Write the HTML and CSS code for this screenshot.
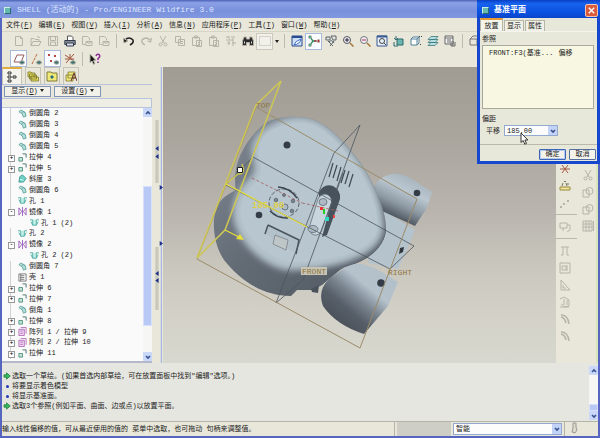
FILE: index.html
```html
<!DOCTYPE html>
<html lang="zh-CN">
<head>
<meta charset="utf-8">
<title>SHELL - Pro/ENGINEER Wildfire 3.0</title>
<link rel="stylesheet" href="styles.css">
</head>
<body>
<svg class="defs" aria-hidden="true">
  <symbol id="new" viewBox="0 0 12 12"><path d="M2.500 1.500h5l2 2v7h-7zM7.500 1.500v2h2"/></symbol>
  <symbol id="open" viewBox="0 0 12 12"><path d="M1 10.500v-7h3l1 1h4v2M1 10.500l2-4h8l-2 4zM7 2q2-1 3 1"/></symbol>
  <symbol id="save" viewBox="0 0 12 12"><path d="M1.500 1.500h9v9h-9zM3.500 1.500v4h5v-4M3.500 10v-3h5v3"/></symbol>
  <symbol id="print" viewBox="0 0 12 12"><path fill="#fff" stroke="#555" d="M3.500 5v-4h4l1.500 1.500v3"/><path fill="#8a8f98" stroke="#333c4c" d="M.8 5.500h10.400v4h-10.400z"/><path fill="#dde" stroke="#333c4c" d="M2.500 8h7v3h-7z"/></symbol>
  <symbol id="mail" viewBox="0 0 12 12"><path d="M1.500 1.500h5l2 2v2M1.500 1.500v8h3M5 6.500h6v4h-6zl3 2 3-2"/></symbol>
  <symbol id="undo" viewBox="0 0 12 12"><path fill="none" stroke="#222" stroke-width="1.500" d="M2 5q4-4 8 0 1 3-3 5"/><path fill="#222" d="M0 3l1 5 4-2z"/></symbol>
  <symbol id="redo" viewBox="0 0 12 12"><path stroke-width="1.200" d="M10 5q-4-4-8 0-1 3 3 5M11.500 3l-1 4-3-1"/></symbol>
  <symbol id="cut" viewBox="0 0 12 12"><path d="M3 1l4 7M9 1l-4 7"/><circle cx="3.500" cy="9.500" r="1.500"/><circle cx="8.500" cy="9.500" r="1.500"/></symbol>
  <symbol id="copy" viewBox="0 0 12 12"><path d="M1.500 1.500h5v6h-5zM4.500 4.500h6v6h-6zM6 6.500h3M6 8.500h3"/></symbol>
  <symbol id="paste" viewBox="0 0 12 12"><path d="M1.500 2.500h7v8h-7zM3.500 1h3v2h-3zM5.500 5.500h5v6h-5zM7 7.500h2M7 9.500h2"/></symbol>
  <symbol id="regen" viewBox="0 0 12 12"><path d="M1 2h3M6 2h4M1 5h2M5 5h3M2 8h3M7 8h4M4 1v9M8 3v8"/></symbol>
  <symbol id="find" viewBox="0 0 12 12"><path fill="#2a2a2a" d="M2 2h2.500v2h3v-2h2.500l1.500 4v4.500h-4v-3h-3v3h-4v-4.500z"/><path stroke="#ddd" d="M2.500 6.500v2M9.500 6.500v2"/></symbol>
  <symbol id="box" viewBox="0 0 12 12"><path stroke-dasharray="1 1" d="M.5 1.500h11v9h-11z"/></symbol>
  <symbol id="repaint" viewBox="0 0 12 12"><path fill="#cfe0f4" stroke="#2b4b92" d="M1 1h10v10h-10z"/><path stroke="#2b4b92" stroke-width="2" d="M1 2h10"/><path fill="#fff" stroke="#3c6ac0" d="M3 10q1-4 7-6-1 5-7 6"/></symbol>
  <symbol id="spin" viewBox="0 0 12 12"><path stroke="#2d8c61" stroke-width="1.300" d="M2 2l3 4-3 4M5 6h3"/><path stroke="#a33" stroke-width="1.300" d="M6 6h4"/><circle cx="10.500" cy="6" r="1.500" fill="#b02c2c"/><circle cx="2" cy="2" r="1.500" fill="#2fa56f"/><circle cx="2" cy="10" r="1.500" fill="#2fa56f"/></symbol>
  <symbol id="orient" viewBox="0 0 12 12"><path stroke="#59636c" d="M1 2h4v3h-4zM6 1h5v4h-3zM3 6l5 5M9 6l-4 5M4 7q3-3 5 1"/></symbol>
  <symbol id="zin" viewBox="0 0 12 12"><circle cx="5" cy="5" r="3.500" fill="#eef" stroke="#555"/><path stroke="#222" d="M3 5h4M5 3v4"/><path stroke="#a77738" stroke-width="1.500" d="M8 8l3.500 3.500"/></symbol>
  <symbol id="zout" viewBox="0 0 12 12"><circle cx="5" cy="5" r="3.500" fill="#eef" stroke="#777"/><path stroke="#a33" d="M3 5h4"/><path stroke="#a77738" stroke-width="1.500" d="M8 8l3.500 3.500"/></symbol>
  <symbol id="refit" viewBox="0 0 12 12"><path fill="#e6f0fa" stroke="#3b5b93" d="M1 1h10v10h-10z"/><path stroke="#3b5b93" stroke-width="2" d="M1 1.500h10"/><circle cx="6" cy="6" r="2.500" stroke="#444"/><path stroke="#444" d="M8 8l2 2"/></symbol>
  <symbol id="view" viewBox="0 0 12 12"><path fill="#6bb6ae" stroke="#2f6970" d="M4 4h6v6h-6z"/><path stroke="#2f6970" d="M1 7v4h4M3 1v3M1 3l2 2 2-2"/></symbol>
  <symbol id="named" viewBox="0 0 12 12"><path fill="#fff" stroke="#53809b" d="M1 4h6v6h-6zM1 4l2-2h6l-2 2M7 10l2-2v-6"/><path stroke="#444" stroke-dasharray="1 1" d="M9 1.500h3M10 9.500h2"/></symbol>
  <symbol id="layers" viewBox="0 0 12 12"><path fill="#b5dfe0" stroke="#3c777c" stroke-width=".8" d="M1 10.500l3-3h7l-3 3zM1 7.500l3-3h7l-3 3zM1 4.500l3-3h7l-3 3z"/></symbol>
  <symbol id="list" viewBox="0 0 12 12"><path fill="#f5f5f5" stroke="#666" d="M1 1h8v8h-8z"/><path stroke="#666" d="M1 3h8M3 5h4M3 7h3M7 6v5M9 6v5M11 7v4M7 11h4"/></symbol>
  <symbol id="wire" viewBox="0 0 12 12"><path stroke="#777" d="M1 4h7v6h-7zM1 4l3-3h7l-3 3M8 10l3-3v-6"/></symbol>
  <symbol id="dplane" viewBox="0 0 12 12"><path stroke="#9a5d58" d="M1 9l3-7h7l-3 7z"/><ellipse cx="9" cy="9.500" rx="2.500" ry="1.800" fill="#3f7270"/></symbol>
  <symbol id="daxis" viewBox="0 0 12 12"><path stroke="#b9663b" stroke-dasharray="3 1" d="M2 11l5-10"/><ellipse cx="9" cy="9.500" rx="2.500" ry="1.800" fill="#3f7270"/></symbol>
  <symbol id="dpoint" viewBox="0 0 12 12"><path stroke="#b04a40" d="M1 1l2 2M3 1l-2 2M7 2l2 2M9 2l-2 2M3 7l2 2M5 7l-2 2"/><ellipse cx="9.500" cy="9.500" rx="2.500" ry="1.800" fill="#3f7270"/></symbol>
  <symbol id="dcsys" viewBox="0 0 12 12"><path stroke="#a0563c" d="M1 2l9 6M10 1l-8 9M6 1v5M1 6h9"/><ellipse cx="9" cy="9.500" rx="2.500" ry="1.800" fill="#3f7270"/></symbol>
  <symbol id="help" viewBox="0 0 12 12"><path fill="#111" d="M1 1v9l2-2 1.500 3.500 1.500-1-1.500-3h2.500z"/><path stroke="#8c2a94" stroke-width="1.500" d="M7 3q1-2.500 3-1.500 2 2-1 4v1.500M9 8.500v1.500"/></symbol>
  <symbol id="tree" viewBox="0 0 12 12"><path stroke="#333" d="M2 1h3v2h-3zM2 5h3v2h-3zM2 9h3v2h-3zM7 5h3v2h-3z"/></symbol>
  <symbol id="folders" viewBox="0 0 12 12"><path fill="#e6df5c" stroke="#77722b" stroke-width=".8" d="M1 2h3l1 1h3v4h-7zM2.500 4h3l1 1h3v4h-7zM4 6h3l1 1h3.500v4h-7.500z"/></symbol>
  <symbol id="favor" viewBox="0 0 12 12"><path fill="#efe978" stroke="#817936" d="M1 2h4l1 1h5v8h-10z"/><path fill="#286a75" d="M6 5l2 2-2 2-2-2z"/></symbol>
  <symbol id="conn" viewBox="0 0 12 12"><path fill="#efe978" stroke="#817936" stroke-width=".8" d="M1 5h7v6h-7zM3 2h7v6h-7z"/><path stroke="#6b3434" d="M6 11l3-8 3 8M7 8h4"/></symbol>
  <symbol id="round" viewBox="0 0 10 10"><path fill="#b6ded9" stroke="#62a59f" d="M1 3q2-3 4-1 4 1 4 6l-3 1q0-4-5-6M4 4q2-2 4 0"/></symbol>
  <symbol id="extrude" viewBox="0 0 10 10"><path fill="#c4e6dd" stroke="#4e927c" d="M1 5h4v4h-4z"/><path stroke="#456d66" d="M5 1h4v4"/></symbol>
  <symbol id="draft" viewBox="0 0 10 10"><path fill="#6fd0c4" stroke="#3a988f" d="M1 9l1-6 3-2 4 4-3 4z"/><path stroke="#dff" d="M2 6l4 1"/></symbol>
  <symbol id="hole" viewBox="0 0 10 10"><path fill="#c6f0ea" stroke="#4aada2" d="M0 2h3v6h4v-6h3M3 8l-2-4M7 8l2-4"/></symbol>
  <symbol id="mirror" viewBox="0 0 10 10"><path stroke="#9a59bd" d="M5 0v10M1 1v8l3-4zM9 1v8l-3-4z"/></symbol>
  <symbol id="shell" viewBox="0 0 10 10"><path stroke="#777" d="M1 1h8v8h-8zM3 1v8M3 3h4M3 5h4M3 7h4"/></symbol>
  <symbol id="pattern" viewBox="0 0 10 10"><path fill="#f3def5" stroke="#a04aa8" stroke-width=".8" d="M1 2.500h6v7h-6z"/><path stroke="#a04aa8" stroke-width=".8" d="M3 .5h6v7M2.500 4.500h3M2.500 7h3"/></symbol>
  <symbol id="up" viewBox="0 0 8 8"><path fill="none" stroke="#3b5390" stroke-width="1.600" d="M2 5l2-2 2 2"/></symbol>
  <symbol id="down" viewBox="0 0 8 8"><path fill="none" stroke="#3b5390" stroke-width="1.600" d="M2 3l2 2 2-2"/></symbol>
  <symbol id="go" viewBox="0 0 8 8"><path fill="#35bb5d" stroke="#1a7738" stroke-width=".7" d="M1 2.800h2.500v-2l3.800 3.200-3.800 3.200v-2h-2.500z"/></symbol>
  <symbol id="star" viewBox="0 0 12 12"><path stroke="#a55a44" d="M1 6h10M3 2l6 8M9 2l-6 8"/></symbol>
  <symbol id="ruler" viewBox="0 0 12 12"><path fill="#efe59b" stroke="#9a8a3c" d="M1 7h10v3h-10z"/><path stroke="#775" d="M3 6l1-3M8 6l-1-3M5 1.500h2M9 3v2"/></symbol>
  <symbol id="dots" viewBox="0 0 12 12"><path d="M1 9l2 2M3 9l-2 2M4 6l2 2M6 6l-2 2M8 3l2 2M10 3l-2 2"/></symbol>
  <symbol id="anno" viewBox="0 0 12 12"><path d="M1 2h7v5h-7zM8 4h3v5l-3 2M4 7v3"/></symbol>
  <symbol id="tee" viewBox="0 0 12 12"><path d="M2 2h8M4 2v8M8 2v8M2 10h2M8 10h2"/></symbol>
  <symbol id="sq" viewBox="0 0 12 12"><path d="M1 1h10v10h-10zM3 4h4v4h-4zM8 3v6"/></symbol>
  <symbol id="angle" viewBox="0 0 12 12"><path d="M2 1v10h9zM4 6v3h3"/></symbol>
  <symbol id="cubes" viewBox="0 0 12 12"><path d="M1 3l4-2 5 3v6l-4 1-4-3M1 11h9M5 3v6M8 4v5"/></symbol>
  <symbol id="arc" viewBox="0 0 12 12"><path stroke-width="1.500" d="M2 2q7 0 8 9M2 4q4 1 5 6"/></symbol>
  <symbol id="circ" viewBox="0 0 12 12"><path d="M1 4h6v7h-6z"/><circle cx="7.500" cy="5" r="3.500"/></symbol>
  <symbol id="grid" viewBox="0 0 12 12"><path d="M1 1h9v10h-9zM4 1v10M7 1v10M1 4h9M1 7h9M11.500 1v10"/></symbol>
</svg>

<div class="window">
  <header class="titlebar"><span class="app-icon"></span><h1>SHELL (活动的) - Pro/ENGINEER Wildfire 3.0</h1></header>
  <nav class="menu">
    <button>文件(<u>F</u>)</button><button>编辑(<u>E</u>)</button><button>视图(<u>V</u>)</button><button>插入(<u>I</u>)</button><button>分析(<u>A</u>)</button><button>信息(<u>N</u>)</button><button>应用程序(<u>P</u>)</button><button>工具(<u>T</u>)</button><button>窗口(<u>W</u>)</button><button>帮助(<u>H</u>)</button>
  </nav>
  <div class="toolbar">
    <button class="tool"><svg><use href="#new"/></svg></button>
    <button class="tool"><svg><use href="#open"/></svg></button>
    <button class="tool"><svg><use href="#save"/></svg></button>
    <button class="tool"><svg><use href="#print"/></svg></button>
    <button class="tool"><svg><use href="#mail"/></svg></button>
    <button class="tool"><svg><use href="#mail"/></svg></button>
    <span class="sep"></span>
    <button class="tool"><svg><use href="#undo"/></svg></button>
    <button class="tool"><svg><use href="#redo"/></svg></button>
    <button class="tool"><svg><use href="#cut"/></svg></button>
    <button class="tool"><svg><use href="#copy"/></svg></button>
    <button class="tool"><svg><use href="#paste"/></svg></button>
    <button class="tool"><svg><use href="#paste"/></svg></button>
    <button class="tool"><svg><use href="#regen"/></svg></button>
    <button class="tool"><svg><use href="#find"/></svg></button>
    <button class="tool raised"><svg><use href="#box"/></svg></button>
    <button class="drop"><i class="caret"></i></button>
    <span class="sep"></span>
    <button class="tool"><svg><use href="#repaint"/></svg></button>
    <button class="tool on"><svg><use href="#spin"/></svg></button>
    <button class="tool"><svg><use href="#orient"/></svg></button>
    <button class="tool"><svg><use href="#zin"/></svg></button>
    <button class="tool"><svg><use href="#zout"/></svg></button>
    <button class="tool"><svg><use href="#refit"/></svg></button>
    <button class="tool"><svg><use href="#view"/></svg></button>
    <button class="tool"><svg><use href="#named"/></svg></button>
    <button class="tool"><svg><use href="#layers"/></svg></button>
    <button class="tool"><svg><use href="#list"/></svg></button>
    <span class="sep"></span>
    <button class="tool"><svg><use href="#wire"/></svg></button>
  </div>
  <div class="toolbar second">
    <button class="tool on"><svg><use href="#dplane"/></svg></button>
    <button class="tool"><svg><use href="#daxis"/></svg></button>
    <button class="tool on"><svg><use href="#dpoint"/></svg></button>
    <button class="tool"><svg><use href="#dcsys"/></svg></button>
    <span class="sep"></span>
    <button class="tool"><svg><use href="#help"/></svg></button>
  </div>

  <main class="work">
    <aside class="side">
      <div class="side-tabs">
        <button class="side-tab current"><svg><use href="#tree"/></svg></button>
        <button class="side-tab"><svg><use href="#folders"/></svg></button>
        <button class="side-tab"><svg><use href="#favor"/></svg></button>
        <button class="side-tab"><svg><use href="#conn"/></svg></button>
      </div>
      <div class="side-actions">
        <button>显示(<u>D</u>)<i class="caret"></i></button>
        <button>设置(<u>G</u>)<i class="caret"></i></button>
      </div>
      <div class="tree-head"></div>
      <div class="tree-box">
        <ul class="tree">
          <li><b></b><svg><use href="#round"/></svg>倒圆角 2</li>
          <li><b></b><svg><use href="#round"/></svg>倒圆角 3</li>
          <li><b></b><svg><use href="#round"/></svg>倒圆角 4</li>
          <li><b></b><svg><use href="#round"/></svg>倒圆角 5</li>
          <li><b class="plus"></b><svg><use href="#extrude"/></svg>拉伸 4</li>
          <li><b class="plus"></b><svg><use href="#extrude"/></svg>拉伸 5</li>
          <li><b></b><svg><use href="#draft"/></svg>斜度 3</li>
          <li><b></b><svg><use href="#round"/></svg>倒圆角 6</li>
          <li><b></b><svg><use href="#hole"/></svg>孔 1</li>
          <li><b class="minus"></b><svg><use href="#mirror"/></svg>镜像 1</li>
          <li class="child"><b></b><svg><use href="#hole"/></svg>孔 1 (2)</li>
          <li><b></b><svg><use href="#hole"/></svg>孔 2</li>
          <li><b class="minus"></b><svg><use href="#mirror"/></svg>镜像 2</li>
          <li class="child"><b></b><svg><use href="#hole"/></svg>孔 2 (2)</li>
          <li><b></b><svg><use href="#round"/></svg>倒圆角 7</li>
          <li><b></b><svg><use href="#shell"/></svg>壳 1</li>
          <li><b class="plus"></b><svg><use href="#extrude"/></svg>拉伸 6</li>
          <li><b class="plus"></b><svg><use href="#extrude"/></svg>拉伸 7</li>
          <li><b></b><svg><use href="#round"/></svg>倒角 1</li>
          <li><b class="plus"></b><svg><use href="#extrude"/></svg>拉伸 8</li>
          <li><b class="plus"></b><svg><use href="#pattern"/></svg>阵列 1 / 拉伸 9</li>
          <li><b class="plus"></b><svg><use href="#pattern"/></svg>阵列 2 / 拉伸 10</li>
          <li><b class="plus"></b><svg><use href="#extrude"/></svg>拉伸 11</li>
        </ul>
        <div class="scroll">
          <button><svg><use href="#up"/></svg></button>
          <span class="space-a"></span><span class="thumb"></span><span class="space-b"></span>
          <button><svg><use href="#down"/></svg></button>
        </div>
      </div>
    </aside>

    <div class="splitter">
      <svg viewBox="0 0 10 296" preserveAspectRatio="none">
        <path fill="#c9c8bc" d="M3 53h3v63h-3zM3 180h3v63h-3z"/>
        <path stroke="#9db0e6" d="M8.500 0v296"/>
        <path fill="#1c2f86" d="M6 79v5l-3-2.500zM6 87v5l-3-2.500zM6 204v5l-3-2.500zM6 211v5l-3-2.500zM7 118v5l3-2.500zM7 174v5l3-2.500z"/>
      </svg>
    </div>

    <section class="viewport">
      <svg viewBox="163 67 393 296" preserveAspectRatio="none">
        <defs>
          <linearGradient id="wall" x1="0" y1="0" x2="1" y2="1"><stop offset="0" stop-color="#858f99"/><stop offset=".5" stop-color="#626a74"/><stop offset="1" stop-color="#4d555f"/></linearGradient>
          <linearGradient id="cyl" gradientUnits="userSpaceOnUse" x1="413" y1="179" x2="394" y2="219"><stop offset="0" stop-color="#a9b6bf"/><stop offset=".3" stop-color="#bac7d0"/><stop offset=".65" stop-color="#8c98a2"/><stop offset="1" stop-color="#454d56"/></linearGradient>
          <linearGradient id="cyl2" gradientUnits="userSpaceOnUse" x1="385" y1="270" x2="342" y2="322"><stop offset="0" stop-color="#b2c0ca"/><stop offset=".35" stop-color="#b5c2cc"/><stop offset=".58" stop-color="#7b8691"/><stop offset=".8" stop-color="#565e68"/><stop offset="1" stop-color="#4d545e"/></linearGradient>
          <filter id="soft" x="-10%" y="-10%" width="120%" height="120%"><feGaussianBlur stdDeviation="3"/></filter>
          <clipPath id="bodyclip"><path d="M264 124C275 116 298 115 312 119C332 126 348 146 362 165C376 186 386 212 386 228C386 244 372 260 345 267L340 270L322 285L313 290L297 290L291 296C262 296 240 280 224 260C212 242 211 215 219 203C224 196 232 192 236 190C233 175 236 148 264 124Z"/></clipPath>
        </defs>
        <path fill="#b5c3cc" d="M375 205l40 25-7 17-10 22-30-6z"/>
        <path fill="#30363c" d="M400 248l4-1-1 5-4 2z"/>
        <path fill="url(#cyl)" d="M373 188Q378 177 392 174Q402 173 412 179L432 192L427 208L415 226L382 211Z"/>
        <g clip-path="url(#bodyclip)">
          <path fill="url(#wall)" d="M205 110h190v195h-190z"/>
          <path id="top-face" filter="url(#soft)" fill="#b4c2cb" d="M272 124C290 114 305 116 314 119C332 125 350 147 364 166C378 187 384 212 384 226C383 242 372 253 350 261C330 268 305 271 285 270C262 265 241 244 235 225C230 208 235 190 249 179C257 172 255 165 252 155C250 140 260 130 272 124Z"/>
          <path fill="#b9c7d0" opacity=".8" d="M276 128C290 121 305 122 312 124C328 130 344 149 358 168C371 188 378 212 378 226C377 237 368 247 348 254C328 260 305 263 288 262C266 256 247 238 242 222C238 208 242 195 254 184C263 176 262 167 259 156C257 143 264 133 276 128Z"/>
          <path fill="none" stroke="#59636d" d="M386 228C386 244 372 260 345 267"/>
        </g>
        <path fill="#4a525c" d="M311 289l8-4-1 8-6-1z"/>
        <path fill="url(#cyl2)" d="M343 269Q352 263 362 264L375 268L398 282L388 306L364 334Q336 325 323 306Q317 290 330 278Z"/>
        <g fill="#343d47"><circle cx="287" cy="145" r="3.500"/><circle cx="417" cy="193" r="3.300"/><circle cx="259" cy="215" r="3.300"/><circle cx="381" cy="283" r="3.800"/></g>
        <path stroke="#3e4a54" stroke-width="1.200" d="M333 163l-4 14M337 165l-4 13M341 167l-4 14M345 170l-4 13M349 171l-4 13M353 174l-4 13"/>
        <path fill="#47525c" d="M319 192q5-9 14-6 8 4 7 13l-13 36-5 2 9-33q0-8-12-4z"/>
        <path fill="#c8d5dc" stroke="#65717a" stroke-width=".8" d="M318 199q4-7 10-4 5 3 3 10l-10 27q-4 5-9 2-4-3-2-9z"/>
        <g fill="#aebbc4" stroke="#606b75" stroke-width=".8"><ellipse cx="323" cy="202" rx="4" ry="3.500"/><ellipse cx="313" cy="229" rx="5" ry="3.500"/></g>
        <path fill="#b3c1ca" d="M266 234l3-9 31 14-3 15z"/><path stroke="#4a545e" stroke-width="1.500" fill="none" d="M268 225l31 15-3 14M265 234l3-9"/>
        <path fill="#bfc6c7" stroke="#7b8288" stroke-width=".8" d="M275 235l13 5-2 10-13-6z"/>
        <g fill="none" stroke="#3b454f" stroke-width="1.500"><path d="M278 187q12 1 19 11M270 211q8 8 18 7"/><ellipse cx="284" cy="203" rx="15" ry="14" stroke-width=".8" stroke-dasharray="4 2"/></g>
        <g fill="#7c8892" stroke="#4b5660" stroke-width=".7"><circle cx="276" cy="200" r="1.800"/><circle cx="284" cy="195" r="1.500"/><circle cx="293" cy="201" r="1.800"/><circle cx="292" cy="211" r="1.800"/><circle cx="285" cy="207" r="3" fill="#aebbc4"/></g>
        <path fill="none" stroke="#4b555e" stroke-width=".8" d="M253 157l161 89-24 23-164-84zM360 125l-26 28-58 150 27-23zM343 173l-15 42"/>
        <path fill="none" stroke="#9a8b6a" stroke-width="1" d="M256 107l161 92-57 149-163-89z"/>
        <path stroke="#a35c58" stroke-width=".8" stroke-dasharray="3 2" fill="none" d="M252 178l50 25M302 203l36 8"/>
        <path fill="none" stroke="#cdc654" stroke-width="1.500" d="M281 81l-25 24-59 153 28-28zM226 184l12-10q8 1 4-10"/>
        <path fill="none" stroke="#e6de3b" stroke-width="1.300" d="M226 184l81 43M225 230l14 7"/><path fill="#e6de3b" d="M244 240l-8-1 4-5z"/>
        <path fill="#e33" d="M320 207h3v3h-3z"/><path fill="#2c2" d="M323 209h2v5h-2z"/><path fill="#2fd9c0" d="M325 217h4v4h-4z"/><path fill="#e44" d="M333 215h2v3h-2z"/>
        <path fill="#fff" stroke="#222" d="M237.500 167.500h5v5h-5z"/>
        <path fill="#c6c4b4" d="M301 267h26v8h-26z"/>
        <text class="datum" x="302" y="274">FRONT</text><text class="datum" x="388" y="275">RIGHT</text><text class="datum" x="256" y="108">TOP</text>
        <text class="dim" x="252" y="208">185.00</text>
      </svg>
    </section>

    <aside class="palette">
      <div class="column">
        <button class="tool"><svg><use href="#star"/></svg></button><button class="tool"><svg><use href="#ruler"/></svg></button><button class="tool"><svg><use href="#dots"/></svg></button>
        <hr>
        <button class="tool"><svg><use href="#anno"/></svg></button>
        <hr>
        <button class="tool"><svg><use href="#tee"/></svg></button><button class="tool"><svg><use href="#sq"/></svg></button><button class="tool"><svg><use href="#angle"/></svg></button><button class="tool"><svg><use href="#cubes"/></svg></button><button class="tool"><svg><use href="#arc"/></svg></button><button class="tool"><svg><use href="#arc"/></svg></button>
      </div>
      <div class="column late">
        <button class="tool"><svg><use href="#cut"/></svg></button><button class="tool"><svg><use href="#circ"/></svg></button><button class="tool"><svg><use href="#circ"/></svg></button><button class="tool"><svg><use href="#grid"/></svg></button>
      </div>
    </aside>
  </main>

  <section class="log">
    <ul>
      <li><svg><use href="#go"/></svg>选取一个草绘。(如果首选内部草绘，可在放置面板中找到"编辑"选项。)</li>
      <li><i class="dot"></i>将要显示着色模型</li>
      <li><i class="dot"></i>将显示基准面。</li>
      <li><svg><use href="#go"/></svg>选取3个参照(例如平面、曲面、边或点)以放置平面。</li>
    </ul>
    <div class="scroll">
      <button><svg><use href="#up"/></svg></button>
      <span class="grow"></span><span class="thumb small"></span>
      <button><svg><use href="#down"/></svg></button>
    </div>
  </section>

  <footer class="status">
    <p>输入线性偏移的值，可从最近使用的值的 菜单中选取，也可拖动 句柄来调整值。</p>
    <span class="slot"></span>
    <div class="combo filter"><select aria-label="过滤器"><option>智能</option></select><span class="combo-btn"><svg><use href="#down"/></svg></span></div>
    <span class="light"><svg viewBox="0 0 8 12"><path fill="#dddcca" stroke="#999" d="M3 1h3v4l1 3-2 3-3-1 1-4z"/></svg></span>
  </footer>
</div>

<form class="dialog">
  <header><span class="app-icon"></span><h2>基准平面</h2><button type="button" class="close" aria-label="关闭"><svg viewBox="0 0 10 10"><path stroke="#fff" stroke-width="1.500" d="M2 2l6 6M8 2l-6 6"/></svg></button></header>
  <div class="tabs"><button type="button" class="current">放置</button><button type="button">显示</button><button type="button">属性</button></div>
  <div class="panel">
    <h3>参照</h3>
    <div class="refs"><span>FRONT:F3(基准...</span><span>偏移</span></div>
    <h3>偏距</h3>
    <div class="field"><label for="offset">平移</label>
      <div class="combo"><input id="offset" type="text" value="185.00"><span class="combo-btn"><svg><use href="#down"/></svg></span></div>
    </div>
  </div>
  <div class="actions"><button type="button" class="default">确定</button><button type="button">取消</button></div>
  <svg class="cursor" viewBox="0 0 9 13"><path fill="#fff" stroke="#222" stroke-width=".9" d="M1 1v9.500l2.200-2 1.600 3.700 1.700-.8-1.600-3.400h3z"/></svg>
</form>
</body>
</html>
```
FILE: styles.css
```css
* { box-sizing: border-box; }

body {
  margin: 0;
  position: relative;
  overflow: hidden;
  font: 7px/10px "Liberation Mono", "Noto Sans CJK SC", monospace;
  color: #222;
}

.defs { position: absolute; width: 0; height: 0; }
h1, h2, h3, p, ul { margin: 0; padding: 0; font-weight: normal; }
ul { list-style: none; }
u { text-decoration-thickness: 1px; }
button, input, select { font: inherit; color: inherit; margin: 0; padding: 0; border: 0; background: none; border-radius: 0; }
svg { display: block; }
button svg, .tree svg { fill: none; stroke: none; }

.window {
  height: 100vh;
  display: flex;
  flex-direction: column;
  background: #e8e7da;
  border: solid #5666c0;
  border-width: 0 2px 2px;
}

.titlebar {
  flex: 0 0 18px;
  display: flex;
  align-items: center;
  gap: 6px;
  padding: 2px 4px 0;
  margin: 0 -2px;
  background: linear-gradient(#4c62b8, #8ba0e6 15%, #7890dc 60%, #8298e0);
}
.titlebar h1 { font-size: 8px; color: #dfe7ff; white-space: nowrap; }
.app-icon { width: 7px; height: 7px; background: #66b9ae; border: 1px solid #c8eee6; border-right-color: #2c6a72; border-bottom-color: #2c6a72; }

.menu { flex: 0 0 14px; display: flex; align-items: center; gap: 6px; padding-left: 4px; white-space: nowrap; border-bottom: 1px solid #d6d4c4; }

.toolbar { flex: 0 0 18px; display: flex; align-items: center; padding-left: 8px; }
.toolbar.second { flex-basis: 17px; }
.tool { flex: 0 0 17px; width: 17px; height: 17px; display: flex; align-items: center; justify-content: center; border: 1px solid transparent; }
.tool svg { width: 12px; height: 12px; stroke: #b5b4a9; }
.tool.on { background: #fafcff; border-color: #a9bbd8; }
.tool.raised { background: #f1f1ea; border-color: #c9c9bf; }
.sep { flex: 0 0 8px; height: 14px; background: linear-gradient(#bdbcae, #bdbcae) center / 1px 100% no-repeat; }
.drop { flex: 0 0 7px; display: flex; justify-content: center; }
.caret { display: inline-block; border: solid transparent; border-width: 3px 2px 0; border-top-color: #222; }

.work { flex: 1; min-height: 0; display: flex; }

.side { flex: 0 0 150px; display: flex; flex-direction: column; min-height: 0; }
.side-tabs { flex: 0 0 17px; display: flex; gap: 3px; }
.side-tab { width: 16px; display: flex; align-items: center; justify-content: center; border: 1px solid #c4c3b6; border-bottom: 0; }
.side-tab.current { width: 20px; background: #f4f4ec; border-top: 2px solid #e0ad41; }
.side-tab svg { width: 12px; height: 12px; }
.side-actions { flex: 0 0 14px; display: flex; gap: 3px; align-items: center; padding-left: 2px; border-top: 1px solid #b9c4dc; }
.side-actions button { width: 47px; height: 11px; line-height: 9px; white-space: nowrap; border: 1px solid #7f93b8; background: #f1f0e9; }
.side-actions .caret { margin: 0 0 1px 2px; }
.tree-head { flex: 0 0 10px; border: 1px solid #b9c4dc; border-width: 1px 1px 1px 0; background: #efeee4; }
.tree-box { flex: 1; min-height: 0; display: flex; overflow: hidden; background: #fafafa; border-bottom: 2px solid #b5b8c8; }
.tree { flex: 1; display: flex; flex-direction: column; margin-bottom: 2px; padding-left: 5px; }
.tree li { flex: 1; display: flex; align-items: center; white-space: pre; }
.tree li svg { width: 9px; height: 9px; margin-right: 2px; }
.tree li.child { padding-left: 12px; }
.tree b { position: relative; width: 7px; height: 100%; margin-right: 4px; background: linear-gradient(#d2d2d2, #d2d2d2) 3px 0 / 1px 100% no-repeat; }
.tree .child b { background: none; }
.plus::before, .minus::before { content: "+"; position: absolute; left: 1px; top: 3px; width: 5px; height: 5px; border: 1px solid #999; background: #fff; font: bold 6px/3px "Liberation Sans", sans-serif; text-align: center; }
.minus::before { content: "-"; }

.scroll { flex: 0 0 9px; display: flex; flex-direction: column; background: #f6f6f4; }
.scroll button { height: 9px; background: #c9d7f8; border-radius: 1px; }
.scroll button svg, .combo-btn svg { width: 8px; height: 8px; margin: auto; }
.thumb { flex: 140; background: #b9c9f5; border: 1px solid #d7e0fb; }
.space-a { flex: 70; }
.space-b { flex: 26; }
.grow { flex: 1; }
.thumb.small { flex: 0 0 7px; }

.splitter { flex: 0 0 11px; background: #e8e7da; }
.splitter svg { width: 100%; height: 100%; fill: none; }

.viewport { flex: 1; min-width: 0; background: linear-gradient(#a09c94, #aaa69e 25%, #bab6af 50%, #cac7be 68%, #d3d1c7 83%, #d7d8cf); }
.viewport svg { width: 100%; height: 100%; }
.datum { font: 8px "Liberation Mono", monospace; fill: #8e7440; }
.dim { font: bold 9px "Liberation Mono", monospace; fill: #ddd04d; }

.palette { flex: 0 0 42px; display: flex; gap: 6px; padding-top: 93px; border-right: 2px solid #d7e4bc; }
.column { flex: 0 0 17px; min-width: 0; display: flex; flex-direction: column; }
.column.late { padding-top: 6px; }
.column hr { width: 21px; margin: 3px 0; border: 0; border-top: 1px solid #b9b8aa; }

.log { flex: 0 0 58px; display: flex; justify-content: space-between; padding-top: 3px; background: #e6e6e0; }
.log ul { padding: 5px 0 0 1px; }
.log li { display: flex; align-items: center; gap: 1px; height: 10px; white-space: nowrap; }
.log li svg { width: 8px; height: 8px; }
.dot { width: 3px; height: 3px; margin: 0 2px 0 3px; border-radius: 50%; background: #2638b8; }
.log .scroll { flex: 0 0 9px; margin-bottom: 1px; }

.status { flex: 0 0 15px; display: flex; align-items: stretch; gap: 2px; border-top: 1px solid #b5b4a8; }
.status p { flex: 1; min-width: 0; line-height: 14px; white-space: nowrap; border-right: 1px solid #b5b4a8; }
.slot { flex: 0 0 54px; background: #cfcec6; }
.filter { flex: 0 0 109px; margin: 1px 0; }
.light { flex: 0 0 34px; padding-left: 5px; border-left: 1px solid #b5b4a8; }
.light svg { width: 8px; height: 12px; }

.combo { display: flex; background: #fcfcfc; border: 1px solid #93a9cf; }
.combo input, .combo select { flex: 1; min-width: 0; width: 0; appearance: none; padding: 0 2px; }
.combo-btn { flex: 0 0 9px; display: flex; background: #c3d3f8; }

.dialog {
  position: absolute;
  top: 0;
  right: 0;
  width: 123px;
  border: solid #1648cf;
  border-width: 0 3px 3px;
  background: #e8e8da;
}
.dialog header { display: flex; align-items: center; gap: 5px; height: 18px; margin: 0 -3px; padding: 2px 2px 0 5px; background: linear-gradient(#0b3fc4, #1763ee 20%, #0a50df 70%, #0c45cb); color: #fff; }
.dialog h2 { flex: 1; font-size: 8px; font-weight: bold; }
.close { width: 13px; height: 13px; background: #dc5a3c; border: 1px solid #f3c3b4; border-radius: 2px; }
.close svg { width: 9px; height: 9px; margin: auto; }
.tabs { display: flex; gap: 1px; align-items: flex-end; height: 14px; border-bottom: 1px solid #f5f5ee; }
.tabs button { width: 20px; height: 11px; background: #f0f0e6; border: 1px solid #b5b5a8; border-bottom: 0; }
.tabs .current { width: 23px; height: 13px; border-top: 2px solid #e59a36; background: #f4f4ea; }
.panel { padding: 1px 3px 8px 2px; }
.refs { display: flex; gap: 5px; height: 64px; margin-bottom: 4px; padding: 2px 6px; white-space: nowrap; background: #f8f8e2; border: 1px solid #a8aa9f; }
.panel h3 { font-size: 7px; line-height: 12px; }
.field { display: flex; align-items: center; gap: 4px; padding-left: 4px; }
.field .combo { flex: 0 0 54px; height: 11px; }
.actions { display: flex; justify-content: flex-end; gap: 3px; padding: 4px 1px 1px 0; border-top: 1px solid #b9b9ac; }
.actions button { width: 27px; height: 11px; line-height: 9px; border: 1px solid #5570a0; border-radius: 1px; background: #f3f3ec; }
.actions .default { border-color: #3c65b8; box-shadow: inset 0 0 0 1px #b4c9f0; }
.cursor { position: absolute; left: 40px; top: 132px; width: 9px; height: 13px; }
```
